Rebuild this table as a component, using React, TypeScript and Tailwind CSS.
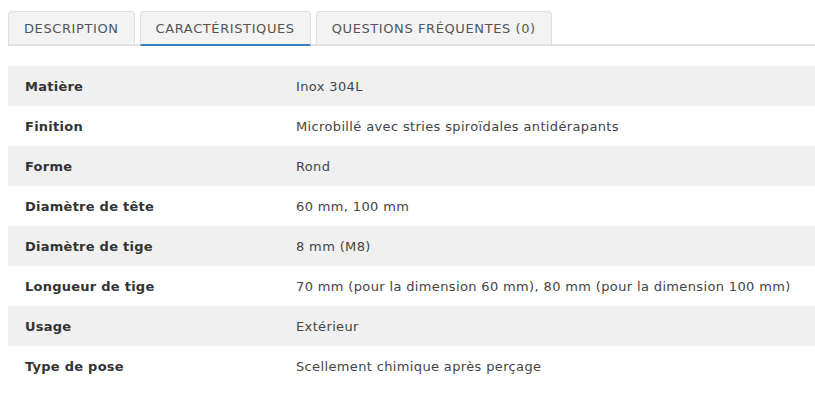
import React from "react";

const rows: [string, string][] = [
  ["Matière", "Inox 304L"],
  ["Finition", "Microbillé avec stries spiroïdales antidérapants"],
  ["Forme", "Rond"],
  ["Diamètre de tête", "60 mm, 100 mm"],
  ["Diamètre de tige", "8 mm (M8)"],
  ["Longueur de tige", "70 mm (pour la dimension 60 mm), 80 mm (pour la dimension 100 mm)"],
  ["Usage", "Extérieur"],
  ["Type de pose", "Scellement chimique après perçage"],
];

const tabBase =
  "h-[35px] -mb-[2px] px-[15px] pt-[2px] flex items-center bg-[#f3f3f3] border border-b-2 border-[#e0e0e0] rounded-t-[4px] text-[13px] tracking-[0.6px] text-[#555]";

export default function App() {
  return (
    <div
      className="w-[815px] h-[402px] bg-white pl-[8px] pt-[11px]"
      style={{ fontFamily: '"DejaVu Sans", Verdana, sans-serif' }}
    >
      <div className="flex gap-[5px] border-b-2 border-[#e3e3e3] h-[35px]">
        <div className={`${tabBase} border-b-[#e3e3e3]`}>DESCRIPTION</div>
        <div className={`${tabBase} border-b-[#3a80c2]`}>CARACTÉRISTIQUES</div>
        <div className={`${tabBase} border-b-[#e3e3e3]`}>QUESTIONS FRÉQUENTES (0)</div>
      </div>
      <div className="mt-[20px]">
        {rows.map(([k, v], i) => (
          <div
            key={k}
            className={`flex h-[40px] items-center pt-[1px] text-[13px] ${i % 2 === 0 ? "bg-[#f0f0f0]" : "bg-white"}`}
          >
            <div className="w-[288px] pl-[17px] font-bold tracking-[0.25px] text-[#333]">{k}</div>
            <div className="tracking-[0.36px] text-[#444]">{v}</div>
          </div>
        ))}
      </div>
    </div>
  );
}
